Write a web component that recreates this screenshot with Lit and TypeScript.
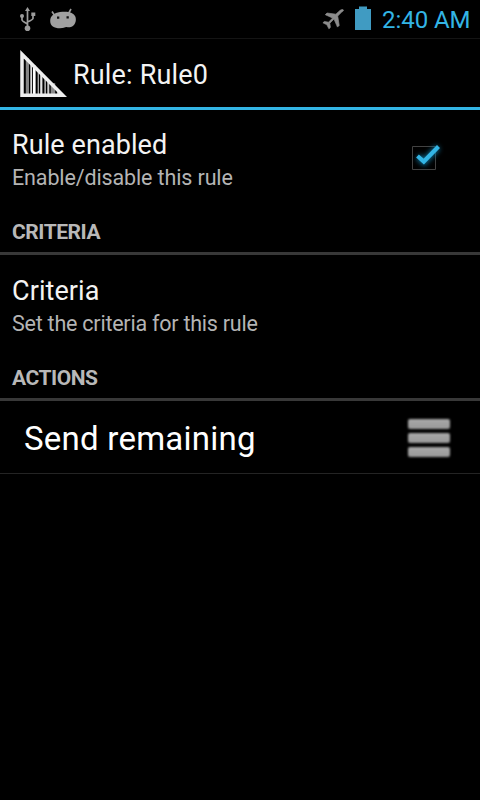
import { LitElement, html, css, svg } from "lit";
import { customElement, property } from "lit/decorators.js";

@customElement("status-bar")
class StatusBar extends LitElement {
  static styles = css`
    :host { display: flex; align-items: center; height: 39px; box-sizing: border-box; padding: 0 9px 0 17px; border-bottom: 1px solid #141414; }
    .notices { display: flex; align-items: center; flex: 1; }
    svg { display: block; flex: none; }
    .android { margin-left: 10px; }
    .battery { margin-left: 9px; }
    .clock { margin-left: 10px; width: 89px; font-size: 24px; line-height: 36px; color: #33b5e5; white-space: nowrap; letter-spacing: -0.05px; padding-top: 2px; }
  `;
  render() {
    return html`
      <div class="notices">
        <svg width="22" height="38" viewBox="17 0 22 38" fill="none" stroke="#9c9c9c" stroke-width="1.7">
          <path d="M27.5 28V9M22 17v3q0 1 5.5 4M33 15.500v3q0 1-5.500 3.500" />
          <path d="M27.500 7l2.500 4h-5z" fill="#9c9c9c" stroke="none" />
          <circle cx="27.500" cy="28.300" r="2.800" fill="#9c9c9c" stroke="none" />
          <circle cx="22" cy="16" r="2" fill="#9c9c9c" stroke="none" />
          <path d="M31.300 12.500h4v3.500h-4z" fill="#9c9c9c" stroke="none" />
        </svg>
        <svg class="android" width="28" height="38" viewBox="49 0 28 38">
          <path d="M52 11.500l3 4.500M71 9l-2.500 4.500" stroke="#9c9c9c" stroke-width="1.600" />
          <path d="M50.200 21c0-5 3.800-8.200 9.800-9 7-.8 13-.2 15.300 4.500 1.400 3.500.2 8-2.800 9.800-2.500 1.500-4.500.8-6 .7-2 0-3 1.300-6.500 1.300C54 28.300 50.200 26 50.200 21z" fill="#a0a0a0" />
          <path d="M57 16.500h2.300v2.300H57zM66.500 16.300h2.300v2.300h-2.300z" fill="#111" />
        </svg>
      </div>
      <svg width="22" height="38" viewBox="322 0 22 38" fill="#8c8c8c">
        <path stroke="#8c8c8c" stroke-width=".7" stroke-linejoin="round" d="M343.300 9.900c-1-1-3 .1-4.500 1.600l-2.900 2.700-8.900-1.200-1.700 1.700 7.300 3.300-4 4.200-4.200-.7-1.500 1.300 4 2 2 4 1.500-1.400-.6-4.200 4.200-4.100 3.500 8 1.700-1.700-1.500-9.300 2.700-2.800c1.500-1.500 3.700-2.400 2.900-3.400z" />
      </svg>
      <svg class="battery" width="19" height="38" viewBox="353 0 19 38">
        <path d="M355 9h4V6.500h8V9h4v21h-16z" fill="#409bc2" />
      </svg>
      <div class="clock">2:40 AM</div>
    `;
  }
}

@customElement("title-bar")
class TitleBar extends LitElement {
  static styles = css`
    :host { display: flex; align-items: center; height: 71px; box-sizing: border-box; padding-left: 19px; border-bottom: 3px solid #33b5e5; }
    svg { display: block; flex: none; }
    .title { margin-left: 6px; font-size: 27px; line-height: 32px; color: #f3f3f3; padding-top: 4px; white-space: nowrap; letter-spacing: 0.17px; }
  `;
  @property() label = "";
  render() {
    const bars = [
      [25.8, 3.2, "#858585"], [30.3, 1.8, "#ddd"], [33, 2.6, "#fff"], [37.6, 1.4, "#aaa"], [40.2, 2.2, "#e4e4e4"],
      [44.4, 1.5, "#bbb"], [47.3, 2, "#ccc"], [50.7, 4.5, "#888"], [57, 2, "#aaa"],
    ] as const;
    return html`
      <svg width="48" height="68" viewBox="19 39 48 68">
        ${bars.map(([x, w, c]) => svg`<rect x=${x} y=${x + 32.5} width=${w} height=${63 - x} fill=${c} />`)}
        <path d="M22 54.300L62.800 95.200H22z" fill="none" stroke="#eee" stroke-width="3.500" stroke-linejoin="miter" />
      </svg>
      <div class="title">${this.label}</div>
    `;
  }
}

@customElement("preference-item")
class PreferenceItem extends LitElement {
  static styles = css`
    :host { display: flex; align-items: center; height: 96px; padding: 0 36px 0 12px; box-sizing: border-box; }
    :host([divided]) { height: 97px; padding-top: 1px; }
    .text { flex: 1; padding: 3px 0 1px; }
    :host([divided]) .text { padding-top: 4px; }
    .name { font-size: 27px; line-height: 32px; color: #f3f3f3; white-space: nowrap; letter-spacing: 0.08px; }
    .summary { font-size: 21.5px; line-height: 25px; margin-top: 4px; color: #b4b4b4; white-space: nowrap; letter-spacing: -0.13px; }
    :host([divided]) .summary { letter-spacing: -0.23px; }
    svg { display: block; flex: none; }
    .glow { filter: blur(2.5px); }
  `;
  @property() name = "";
  @property() summary = "";
  @property({ type: Boolean }) checked = false;
  render() {
    return html`
      <div class="text">
        <div class="name">${this.name}</div>
        <div class="summary">${this.summary}</div>
      </div>
      ${this.checked ? html`
        <svg width="38" height="40" viewBox="406 138 38 40" fill="none">
          <path d="M412.500 146.500h23v23h-23z" stroke="#424242" />
          <path class="glow" d="M418 156.500l6 5.500 14-15" stroke="#0d6c92" stroke-width="6" />
          <path d="M417.500 156l6.300 5.500 14.700-15" stroke="#33b5e5" stroke-width="4.200" />
        </svg>` : ""}
    `;
  }
}

@customElement("category-header")
class CategoryHeader extends LitElement {
  static styles = css`
    :host { display: flex; align-items: flex-end; height: 49px; box-sizing: border-box; padding: 0 12px 7px; border-bottom: 3px solid #383838; font-size: 21px; font-weight: 700; line-height: 25px; color: #b8b8b8; letter-spacing: -0.45px; }
  `;
  @property() label = "";
  render() {
    return html`<span>${this.label}</span>`;
  }
}

@customElement("action-item")
class ActionItem extends LitElement {
  static styles = css`
    :host { display: flex; align-items: center; height: 73px; box-sizing: border-box; padding: 0 30px 0 24px; border-bottom: 1px solid #242424; }
    .name { flex: 1; font-size: 33px; line-height: 40px; color: #fff; padding-top: 4px; white-space: nowrap; letter-spacing: 0.24px; }
    .grip { display: flex; flex-direction: column; gap: 4px; padding-top: 1px; }
    .grip i { display: block; width: 42px; height: 10px; border-radius: 2px; background: linear-gradient(#a9a9a9, #999); filter: blur(0.8px); }
  `;
  @property() label = "";
  render() {
    return html`<div class="name">${this.label}</div><div class="grip"><i></i><i></i><i></i></div>`;
  }
}

@customElement("app-root")
class AppRoot extends LitElement {
  static styles = css`
    :host { display: flex; flex-direction: column; width: 480px; height: 800px; background: #000; font-family: Roboto, "Noto Sans", sans-serif; overflow: hidden; }
    :host > * { flex: none; }
  `;
  render() {
    return html`
      <status-bar></status-bar>
      <title-bar label="Rule: Rule0"></title-bar>
      <preference-item name="Rule enabled" summary="Enable/disable this rule" checked></preference-item>
      <category-header label="CRITERIA"></category-header>
      <preference-item name="Criteria" summary="Set the criteria for this rule" divided></preference-item>
      <category-header label="ACTIONS"></category-header>
      <action-item label="Send remaining"></action-item>
    `;
  }
}
